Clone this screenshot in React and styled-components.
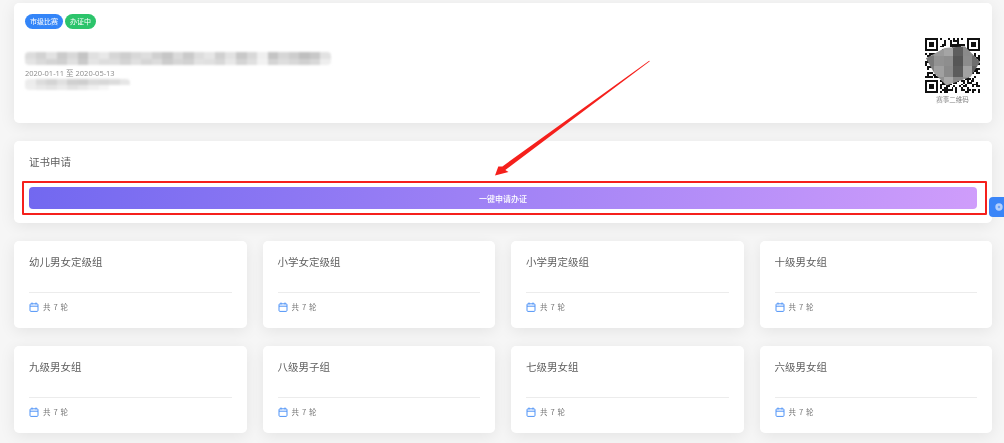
import React from 'react';
import styled, { createGlobalStyle } from 'styled-components';

const GlobalStyle = createGlobalStyle`
  html, body {
    margin: 0;
    padding: 0;
    background: #f6f6f6;
    overflow: hidden;
  }
  * { box-sizing: border-box; }
`;

const Page = styled.div`
  position: relative;
  width: 1004px;
  height: 443px;
  padding: 3px 12px 0 14px;
  display: flex;
  flex-direction: column;
  font-family: "Noto Sans CJK SC", "Noto Sans", sans-serif;
  filter: blur(0.45px);
`;

const Panel = styled.section`
  background: #fff;
  border-radius: 5px;
  box-shadow: 0 3px 16px rgba(0, 0, 0, 0.08);
`;

const InfoPanel = styled(Panel)`
  height: 120px;
  padding: 11px 12px 0 11px;
  display: flex;
  justify-content: space-between;
`;

const InfoLeft = styled.div`
  display: flex;
  flex-direction: column;
`;

const Tags = styled.div`
  display: flex;
  gap: 2px;
`;

const Tag = styled.span`
  height: 15px;
  padding: 0 5px;
  border-radius: 8px;
  background: ${props => props.$bg};
  color: #fff;
  font-size: 7px;
  line-height: 15px;
`;

const Mosaic = styled.div`
  display: grid;
  grid-template-columns: repeat(${props => props.$cols}, 1fr);
  grid-auto-rows: 1fr;
  width: ${props => props.$width}px;
  height: ${props => props.$height}px;
  margin-top: ${props => props.$top}px;
  filter: blur(0.9px);
  overflow: hidden;
  border-radius: 4px;
`;

const Cell = styled.div`
  background: ${props => props.$shade};
`;

const DateText = styled.div`
  margin-top: 2px;
  height: 12px;
  font-family: "Open Sans", "Noto Sans CJK SC", sans-serif;
  font-size: 7.5px;
  line-height: 12px;
  color: #8a8a8a;
`;

const QrBlock = styled.div`
  margin-top: 24px;
  display: flex;
  flex-direction: column;
  align-items: center;
`;

const QrCaption = styled.div`
  margin-top: 1px;
  font-size: 6.5px;
  line-height: 10px;
  color: #808080;
`;

const ApplyPanel = styled(Panel)`
  height: 82px;
  margin-top: 18px;
  padding: 12px 15px 0;
`;

const SectionTitle = styled.h2`
  margin: 0;
  font-size: 10.5px;
  font-weight: 400;
  line-height: 18px;
  color: #5e5e5e;
`;

const ApplyButton = styled.button`
  display: block;
  width: 948px;
  height: 22px;
  margin-top: 16px;
  padding: 0;
  border: none;
  border-radius: 4px;
  background: linear-gradient(100deg, #7268f0 0%, #cf9dfb 100%);
  color: #fff;
  font-family: inherit;
  font-size: 8px;
  font-weight: 500;
`;

const Groups = styled.div`
  display: grid;
  grid-template-columns: repeat(4, 1fr);
  column-gap: 16px;
  row-gap: 18px;
  margin-top: 18px;
`;

const GroupCard = styled(Panel)`
  height: 87px;
  padding: 12px 15px 0;
`;

const GroupName = styled.h3`
  margin: 0;
  height: 39px;
  font-size: 10.5px;
  font-weight: 400;
  line-height: 18px;
  color: #5e5e5e;
`;

const GroupFooter = styled.div`
  display: flex;
  align-items: center;
  gap: 4px;
  height: 28px;
  border-top: 1px solid #ececec;
  font-size: 7.5px;
  letter-spacing: 0.6px;
  color: #777;
`;

const FloatButton = styled.div`
  position: absolute;
  left: 989px;
  top: 197px;
  width: 15px;
  height: 20px;
  padding-left: 6px;
  display: flex;
  align-items: center;
  background: #3a85f8;
  border-radius: 4px 0 0 4px;
`;

const RedFrame = styled.div`
  position: absolute;
  left: 22px;
  top: 181px;
  width: 965px;
  height: 34px;
  border: 2px solid #f5201c;
  border-radius: 1px;
`;

const ArrowLayer = styled.svg`
  position: absolute;
  left: 0;
  top: 0;
  pointer-events: none;
`;

const titleShades = ['#dcdcdc', '#d2d2d2', '#e2e2e2', '#cbcbcb', '#d8d8d8', '#c4c4c4', '#e0e0e0', '#e8e8e8', '#d6d6d6', '#cecece', '#d8d8d8', '#dedede', '#d0d0d0', '#c6c6c6', '#dadada', '#cacaca', '#dddddd', '#e6e6e6', '#d0d0d0', '#e2e2e2', '#c8c8c8', '#d8d8d8', '#efefef', '#c4c4c4', '#d6d6d6', '#cdcdcd', '#bfbfbf', '#c8c8c8', '#e2e2e2',
  '#e4e4e4', '#dadada', '#d4d4d4', '#d0d0d0', '#e0e0e0', '#cacaca', '#e4e4e4', '#dddddd', '#dedede', '#d4d4d4', '#e0e0e0', '#d6d6d6', '#dcdcdc', '#cccccc', '#d6d6d6', '#d2d2d2', '#e2e2e2', '#e0e0e0', '#d8d8d8', '#e8e8e8', '#d4d4d4', '#e0e0e0', '#f2f2f2', '#d4d4d4', '#dedede', '#d8d8d8', '#d0d0d0', '#d8d8d8', '#eeeeee'];

const subShades = ['#ececec', '#dcdcdc', '#d4d4d4', '#e0e0e0', '#d0d0d0', '#cecece', '#dadada', '#d8d8d8', '#dcdcdc', '#e6e6e6',
  '#eeeeee', '#e8e8e8', '#e4e4e4', '#ebebeb', '#e2e2e2', '#e8e8e8', '#f0f0f0', '#f6f6f6', '#ffffff', '#ffffff'];

const groups = ['幼儿男女定级组', '小学女定级组', '小学男定级组', '十级男女组', '九级男女组', '八级男子组', '七级男女组', '六级男女组'];

// pseudo random modules for the QR code
const qrSize = 29;
const qrModules = [];
for (let y = 0; y < qrSize; y++) {
  for (let x = 0; x < qrSize; x++) {
    const inFinder = (x < 8 && y < 8) || (x > qrSize - 9 && y < 8) || (x < 8 && y > qrSize - 9);
    const seed = Math.sin(x * 12.9898 + y * 78.233) * 43758.5453;
    if (!inFinder && seed - Math.floor(seed) < 0.5) qrModules.push([x, y]);
  }
}

const finders = [[0, 0], [qrSize - 7, 0], [0, qrSize - 7]];
const qrBlur = [
  ['#8c8c8c', '#9a9a9a', '#a5a5a5', '#5e5e5e', '#8a8a8a', '#7c7c7c'],
  ['#7a7a7a', '#929292', '#8e8e8e', '#565656', '#8c8c8c', '#6e6e6e'],
  ['#808080', '#a0a0a0', '#8a8a8a', '#5c5c5c', '#a2a2a2', '#5f5f5f'],
  ['#8e8e8e', '#909090', '#a8a8a8', '#868686', '#969696', '#727272'],
];

const QrCode = () => (
  <svg width="55" height="55" viewBox="0 0 29 29" shapeRendering="crispEdges">
    <defs>
      <clipPath id="qrBlob">
        <path d="M0.5 10.7 L10.4 5.3 L21 4.4 L29 12.5 L24 20.5 L11.3 25 L5 18.7 Z" />
      </clipPath>
    </defs>
    <rect width="29" height="29" fill="#fff" />
    {qrModules.map(([x, y]) => <rect key={x + '-' + y} x={x} y={y} width="1" height="1" fill="#111" />)}
    {finders.map(([x, y]) => (
      <g key={x + '-' + y}>
        <rect x={x} y={y} width="7" height="7" fill="#111" />
        <rect x={x + 1} y={y + 1} width="5" height="5" fill="#fff" />
        <rect x={x + 2} y={y + 2} width="3" height="3" fill="#111" />
      </g>
    ))}
    <g clipPath="url(#qrBlob)">
      {qrBlur.map((row, r) => row.map((shade, c) => (
        <rect key={r + '-' + c} x={c * 5} y={4 + r * 5.5} width="5" height="5.5" fill={shade} />
      )))}
    </g>
  </svg>
);

const CalendarIcon = () => (
  <svg width="10" height="10" viewBox="0 0 10 10" fill="none" stroke="#4f93f7" strokeWidth="1">
    <rect x="1" y="1.8" width="8" height="7.6" rx="1" />
    <path d="M1 4.2H9M3 0.5V2.5M7 0.5V2.5" />
  </svg>
);

const GearIcon = () => (
  <svg width="8" height="8" viewBox="0 0 10 10">
    <circle cx="5" cy="5" r="4.6" fill="#b4d0fc" />
    <circle cx="5" cy="5" r="1.6" fill="#6ea4f9" />
  </svg>
);

const App = () => {
  return (
    <>
      <GlobalStyle />
      <Page>
        <InfoPanel>
          <InfoLeft>
            <Tags>
              <Tag $bg="#3385f8">市级比赛</Tag>
              <Tag $bg="#2cc46b">办证中</Tag>
            </Tags>
            <Mosaic $cols={29} $width={306} $height={13} $top={23}>
              {titleShades.map((shade, i) => <Cell key={i} $shade={shade} />)}
            </Mosaic>
            <DateText>2020-01-11 至 2020-05-13</DateText>
            <Mosaic $cols={10} $width={105} $height={11} $top={0}>
              {subShades.map((shade, i) => <Cell key={i} $shade={shade} />)}
            </Mosaic>
          </InfoLeft>
          <QrBlock>
            <QrCode />
            <QrCaption>赛事二维码</QrCaption>
          </QrBlock>
        </InfoPanel>

        <ApplyPanel>
          <SectionTitle>证书申请</SectionTitle>
          <ApplyButton>一键申请办证</ApplyButton>
        </ApplyPanel>

        <Groups>
          {groups.map(name => (
            <GroupCard key={name}>
              <GroupName>{name}</GroupName>
              <GroupFooter>
                <CalendarIcon />
                共 7 轮
              </GroupFooter>
            </GroupCard>
          ))}
        </Groups>

        <FloatButton><GearIcon /></FloatButton>
        <RedFrame />
        <ArrowLayer width="1004" height="443" viewBox="0 0 1004 443">
          <polygon points="649.8,61.3 505.3,170 508.5,172 495,175.5 498.3,166.5 502.4,166.4 649.2,60.7" fill="#f5201c" />
        </ArrowLayer>
      </Page>
    </>
  );
};

export default App;
